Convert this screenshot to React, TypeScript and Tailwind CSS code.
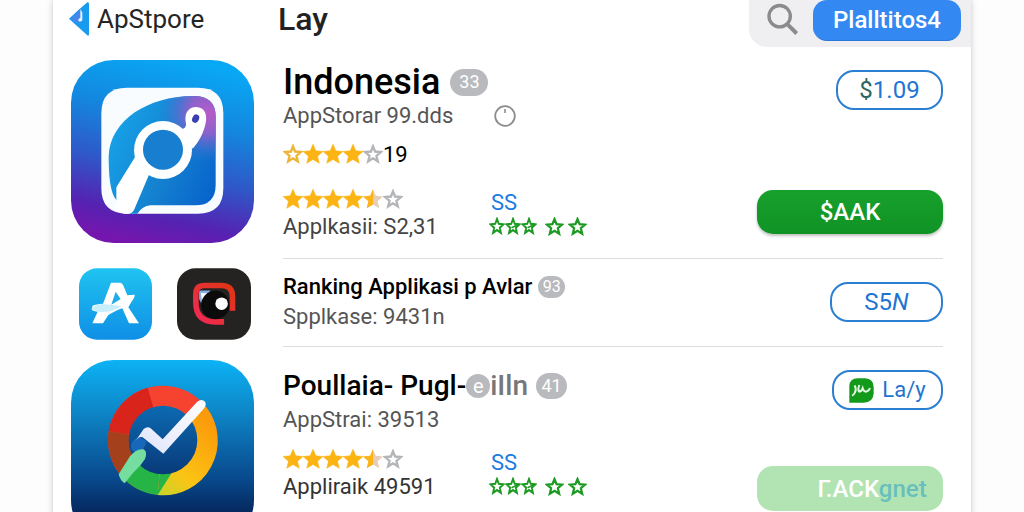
import React from "react";
import clsx from "clsx";

type StarKind = "full" | "half" | "hollow" | "empty";

const STAR = "M12 1.2 15.1 8.5 23 9.2 17 14.4 18.9 22.2 12 18 5.1 22.2 7 14.4 1 9.2 8.9 8.5Z";

const Star: React.FC<{ kind: StarKind }> = ({ kind }) => {
  if (kind === "full") {
    return (
      <svg viewBox="1 1 22 22" className="w-5 h-5">
        <path d={STAR} fill="#fbb414" stroke="#fbb414" strokeWidth="0.6" />
      </svg>
    );
  }
  if (kind === "half") {
    return (
      <svg viewBox="1 1 22 22" className="w-5 h-5">
        <path d={STAR} fill="#e6cdb8" />
        <path d="M12 1.2V18L5.1 22.2 7 14.4 1 9.2 8.9 8.5Z" fill="#fbb414" />
      </svg>
    );
  }
  return (
    <svg viewBox="1 1 22 22" className="w-5 h-5">
      <path
        d="M12 3.6 14.3 9.3 20.6 9.9 15.8 14 17.3 20.1 12 16.8 6.7 20.1 8.2 14 3.4 9.9 9.7 9.3Z"
        fill="#fff"
        stroke={kind === "hollow" ? "#eeb437" : "#b4b5b8"}
        strokeWidth="2.6"
      />
    </svg>
  );
};

const Stars: React.FC<{ kinds: StarKind[]; label: string }> = ({ kinds, label }) => (
  <div role="img" aria-label={label} className="flex">
    {kinds.map((kind, i) => (
      <Star key={i} kind={kind} />
    ))}
  </div>
);

const GreenStar: React.FC<{ small?: boolean; cut?: boolean }> = ({ small, cut }) => (
  <svg viewBox="1 1 22 22" preserveAspectRatio="none" className={small ? "w-4 h-[18px]" : "w-[19px] h-[19px]"}>
    <path
      d="M12 3.4 14.4 9.3 20.8 9.9 15.9 14 17.4 20.4 12 17 6.6 20.4 8.1 14 3.2 9.9 9.6 9.3Z"
      fill="#fff"
      stroke="#1c9a22"
      strokeWidth="2.6"
    />
    {cut && <path d="m10 14 10-4" stroke="#1c9a22" strokeWidth="2" />}
  </svg>
);

const Extra: React.FC = () => (
  <div className="pt-[2px]">
    <p className="pl-[2px] text-[22px] leading-6 text-[#1a7be0]">SS</p>
    <div className="flex items-center h-[22px]">
      <GreenStar small />
      <GreenStar small cut />
      <GreenStar small cut />
      <span className="flex gap-1 ml-2">
        <GreenStar />
        <GreenStar />
      </span>
    </div>
  </div>
);

const Badge: React.FC<{ children: React.ReactNode; className?: string }> = ({ children, className }) => (
  <span
    className={clsx(
      "inline-flex items-center justify-center rounded-full bg-[#b9babd] font-normal text-white",
      className
    )}
  >
    {children}
  </span>
);

const PillButton: React.FC<{ children: React.ReactNode; className?: string }> = ({ children, className }) => (
  <button
    className={clsx(
      "flex items-center justify-center h-10 rounded-[18px] border-2 border-[#2b7fd3] bg-white text-2xl text-[#1f74d2]",
      className
    )}
  >
    {children}
  </button>
);

const SearchAppIcon: React.FC = () => (
  <svg viewBox="32 30 549 549" className="w-[183px] h-[183px]">
    <defs>
      <linearGradient id="sBg" x1="0.6" y1="0" x2="0.38" y2="1">
        <stop offset="0" stopColor="#09a8f5" />
        <stop offset="0.3" stopColor="#1388df" />
        <stop offset="0.6" stopColor="#2f58c8" />
        <stop offset="0.85" stopColor="#5522b2" />
        <stop offset="1" stopColor="#7416ae" />
      </linearGradient>
      <linearGradient id="sInner" x1="0" y1="0.3" x2="1" y2="0.8">
        <stop offset="0" stopColor="#17a2e8" />
        <stop offset="0.55" stopColor="#1481cf" />
        <stop offset="1" stopColor="#0763cc" />
      </linearGradient>
      <radialGradient id="sPink" cx="445" cy="190" r="150" gradientUnits="userSpaceOnUse">
        <stop offset="0" stopColor="#b85bc6" />
        <stop offset="0.4" stopColor="#8a62cc" />
        <stop offset="1" stopColor="#2c78d6" stopOpacity="0" />
      </radialGradient>
    </defs>
    <rect x="32" y="30" width="549" height="549" rx="128" fill="url(#sBg)" />
    <path
      d="M200 113H413Q489 113 489 190V415Q489 491 413 491H200Q123 491 123 415V190Q123 113 200 113Z"
      fill="#f8fcff"
    />
    <path
      d="M145 318C150 210 262 139 398 138Q466 137 466 200V404Q466 466 404 466H270Q246 468 231 491H205L168 450C150 430 145 380 145 318Z"
      fill="url(#sInner)"
    />
    <path
      d="M145 318C150 210 262 139 398 138Q466 137 466 200V404Q466 466 404 466H270Q246 468 231 491H205L168 450C150 430 145 380 145 318Z"
      fill="url(#sPink)"
    />
    <path d="M226 318 168 412V452L160 470 190 491H208Q217 489 221 480L266 374Z" fill="#fff" />
    <path
      d="M368 236Q381 232 376 215C372 190 384 171 408 171C431 172 440 190 437 214C431 250 415 275 398 295L372 300 346 250Z"
      fill="#fff"
    />
    <circle cx="308" cy="300" r="87" fill="#fff" />
    <circle cx="308" cy="299" r="60" fill="#187fd0" />
    <ellipse cx="406" cy="206" rx="10" ry="13" transform="rotate(25 406 206)" fill="#393fae" />
  </svg>
);

const StoreIcon: React.FC = () => (
  <svg viewBox="54 38 219 214" className="w-[73px] h-[72px]">
    <defs>
      <linearGradient id="aBg" x1="0" y1="0" x2="0" y2="1">
        <stop offset="0" stopColor="#1fc3f0" />
        <stop offset="1" stopColor="#0f8fe6" />
      </linearGradient>
    </defs>
    <rect x="54" y="38" width="219" height="214" rx="54" fill="url(#aBg)" />
    <path
      d="M150 81H178Q184 82 188 92L199 119 221 117Q223 122 211 139L202 155 234 203H204L184 158Q172 162 158 169L142 178 126 203H94L110 168Q92 166 92 160L95 150Q105 145 126 144Z"
      fill="#fff"
    />
    <path d="M164 108 179 130 151 147Z" fill="#20abea" />
    <path d="M92 162Q94 148 125 145L181 151Q155 171 116 169Z" fill="#c8edfb" />
  </svg>
);

const CameraIcon: React.FC = () => (
  <svg viewBox="350 38 224 216" className="w-[74px] h-[72px]">
    <defs>
      <linearGradient id="cRed" x1="0" y1="1" x2="1" y2="0">
        <stop offset="0" stopColor="#f22a55" />
        <stop offset="1" stopColor="#dd3513" />
      </linearGradient>
    </defs>
    <rect x="350" y="38" width="224" height="216" rx="56" fill="#252322" />
    <path
      d="M518 158V124Q518 90 485 90H434Q407 90 407 116V141Q407 200 466 200H484"
      fill="none"
      stroke="url(#cRed)"
      strokeWidth="17"
      strokeLinecap="square"
      strokeLinejoin="round"
    />
    <path d="M417 109Q418 105 424 105H451L427 145Q419 140 417 130Z" fill="#86aee6" />
    <path d="M422 113H441L426 139Z" fill="#f3f7ff" />
    <circle cx="466" cy="149" r="43" fill="#0b0b0c" />
    <circle cx="485" cy="145" r="19" fill="#fff" />
  </svg>
);

const CheckAppIcon: React.FC = () => (
  <svg viewBox="32 45 549 549" className="w-[183px] h-[183px]">
    <defs>
      <linearGradient id="kBg" x1="0" y1="0" x2="0" y2="1">
        <stop offset="0" stopColor="#0cb3f5" />
        <stop offset="0.3" stopColor="#0d83c4" />
        <stop offset="0.65" stopColor="#08498c" />
        <stop offset="0.85" stopColor="#05255a" />
      </linearGradient>
      <linearGradient id="kDisc" x1="0" y1="0" x2="0" y2="1">
        <stop offset="0" stopColor="#0d6ab2" />
        <stop offset="1" stopColor="#083a79" />
      </linearGradient>
      <linearGradient id="kYellow" x1="0" y1="1" x2="0.6" y2="0">
        <stop offset="0" stopColor="#c4d52c" />
        <stop offset="0.35" stopColor="#fbc414" />
        <stop offset="1" stopColor="#fb9a0a" />
      </linearGradient>
      <linearGradient id="kTick" x1="0" y1="1" x2="1" y2="0">
        <stop offset="0" stopColor="#dfe3fb" />
        <stop offset="1" stopColor="#fff" />
      </linearGradient>
    </defs>
    <rect x="32" y="45" width="549" height="549" rx="128" fill="url(#kBg)" />
    <circle cx="307" cy="286" r="164" fill="#f54330" />
    <path d="M307 286 145 258A164 164 0 0 1 262 128Z" fill="#d9241b" />
    <path d="M307 286 145 258A164 164 0 0 0 190 400Z" fill="#a4411c" />
    <path d="M307 286 184 394A164 164 0 0 0 292 450Z" fill="#25b445" />
    <path d="M307 286 292 450A164 164 0 0 0 436 184Z" fill="url(#kYellow)" />
    <path d="M307 286 292 450 334 384Z" fill="#25b445" />
    <circle cx="308" cy="285" r="103" fill="url(#kDisc)" />
    <path d="M216 318Q202 290 236 276L258 288Q254 318 230 322Z" fill="#1768ba" />
    <path
      d="M225 289 250 252Q262 242 271 250L307 283 410 171Q424 159 434 170 440 180 429 193L309 326 247 277Q236 272 225 289Z"
      fill="url(#kTick)"
    />
    <path d="M175 388 209 334Q228 310 250 313 262 320 254 342 240 365 218 384L193 415Q180 408 175 388Z" fill="#76dda0" />
  </svg>
);

export default function App() {
  return (
    <div className="h-screen overflow-hidden bg-[#fdfdfd] px-[53px] font-['Roboto','Liberation_Sans',sans-serif] text-black">
      <main className="min-h-full bg-white shadow-[0_0_6px_rgba(0,0,0,0.22)]">
        <header className="flex items-start justify-between">
          <div className="flex items-center h-[38px] pl-4">
            <a href="#back" className="flex items-center gap-2 w-[209px] text-[26px] text-[#252525]">
              <svg viewBox="0 0 60 102" className="w-5 h-[34px]">
                <path d="M0 50Q28 24 55 1 60-1 60 6V96Q60 104 54 99Z" fill="#179bef" />
                <path d="M5 50 39 18V60Q25 66 14 56Z" fill="#4787ec" />
                <path d="M34 21 40 32V55Q35 62 28 56 27 49 34 48Z" fill="#e8f1ff" />
              </svg>
              ApStpore
            </a>
            <h1 className="text-[32px] font-medium text-[#222]">Lay</h1>
          </div>
          <div className="flex items-start h-[47px] pl-[18px] pr-[10px] rounded-bl-[18px] bg-[#efeff1]">
            <button aria-label="Search" className="mt-[3px] mr-[14px]">
              <svg viewBox="0 0 96 98" className="w-8 h-[33px]">
                <circle cx="38" cy="39" r="32" fill="none" stroke="#8b8b8c" strokeWidth="10" />
                <path d="m61 63 28 28" stroke="#8b8b8c" strokeWidth="12" />
              </svg>
            </button>
            <button className="h-[41px] w-[148px] rounded-[14px] border-b border-[#2a78d8] bg-[#3389f1] text-2xl font-medium text-white">
              Plalltitos4
            </button>
          </div>
        </header>

        <article className="flex gap-[29px] pl-[18px] pr-7">
          <div className="shrink-0 pt-[13px]">
            <SearchAppIcon />
          </div>
          <div className="flex flex-1 justify-between border-b border-[#dcdcdd] pt-[17px] pb-[17px]">
            <div>
              <h2 className="flex items-center gap-[10px] text-4xl leading-9 font-medium">
                Indonesia
                <Badge className="w-[38px] h-[27px] text-lg">33</Badge>
              </h2>
              <div className="flex items-center mt-[2px]">
                <p className="w-[211px] text-[22px] leading-7 text-[#555]">AppStorar 99.dds</p>
                <svg viewBox="0 0 22 22" className="w-[22px] h-[22px]">
                  <circle cx="11" cy="11" r="9.8" fill="none" stroke="#8c8c8e" strokeWidth="1.8" />
                  <path d="M11 4v4" stroke="#8c8c8e" strokeWidth="1.6" />
                </svg>
              </div>
              <div className="flex items-center mt-[14px] h-5 text-[22px]">
                <Stars kinds={["hollow", "full", "full", "full", "empty"]} label="3 of 5" />
                19
              </div>
              <div className="flex mt-[25px]">
                <div className="w-[206px]">
                  <Stars kinds={["full", "full", "full", "full", "half", "empty"]} label="4.5 of 6" />
                  <p className="mt-1 text-[22px] leading-7 text-[#444]">Applkasii: S2,31</p>
                </div>
                <Extra />
              </div>
            </div>
            <div className="flex flex-col items-end justify-between pt-[6px] pb-[7px]">
              <PillButton className="w-[107px]">
                <span className="text-[#2c6660]">$</span>1.09
              </PillButton>
              <button className="h-11 w-[186px] rounded-2xl bg-linear-to-b from-[#18a02c] to-[#0f9325] text-2xl font-medium text-white shadow-[0_2px_3px_rgba(0,0,0,0.25)]">
                $AAK
              </button>
            </div>
          </div>
        </article>

        <article className="flex gap-[29px] pl-[18px] pr-7">
          <div className="flex items-center shrink-0 gap-[25px] w-[183px] pt-[2px] pl-2">
            <StoreIcon />
            <CameraIcon />
          </div>
          <div className="flex flex-1 items-center justify-between border-b border-[#dcdcdd] pt-[14px] pb-[15px]">
            <div>
              <h2 className="flex items-center gap-[6px] text-[22px] leading-7 font-medium">
                Ranking Applikasi p Avlar
                <Badge className="w-[27px] h-[22px] text-base">93</Badge>
              </h2>
              <p className="mt-[2px] text-[22px] leading-7 text-[#555]">Spplkase: 9431n</p>
            </div>
            <PillButton className="w-[113px]">
              S5<span className="italic">N</span>
            </PillButton>
          </div>
        </article>

        <article className="flex gap-[29px] pl-[18px] pr-7">
          <div className="shrink-0 pt-[13px]">
            <CheckAppIcon />
          </div>
          <div className="flex flex-1 items-start justify-between pt-[21px]">
            <div>
              <h2 className="flex items-center text-[28px] leading-9 font-medium">
                Poullaia- Pugl-
                <Badge className="w-6 h-6 text-xl">e</Badge>
                <span className="text-[#77777a]">iIln</span>
                <Badge className="ml-2 w-[31px] h-[26px] text-lg">41</Badge>
              </h2>
              <p className="mt-[2px] text-[22px] leading-7 text-[#555]">AppStrai: 39513</p>
              <div className="flex mt-[15px]">
                <div className="w-[206px]">
                  <Stars kinds={["full", "full", "full", "full", "half", "empty"]} label="4.5 of 6" />
                  <p className="mt-1 text-[22px] leading-7 text-[#333]">Appliraik 49591</p>
                </div>
                <Extra />
              </div>
            </div>
            <div className="flex flex-col items-end gap-14 pt-[2px]">
              <PillButton className="w-[111px] gap-2">
                <svg viewBox="0 0 75 75" className="w-[25px] h-[25px]">
                  <path d="M1 74V24Q2 1 26 1H48Q74 2 74 28V46Q73 74 44 74Z" fill="#139a1b" />
                  <path
                    d="M17 22Q23 34 18 43 14 51 9 53M31 21Q25 36 31 41 38 40 41 31 44 42 52 41 61 38 63 30"
                    fill="none"
                    stroke="#e4f8e4"
                    strokeWidth="6"
                  />
                </svg>
                <span className="text-[22px]">La/y</span>
              </PillButton>
              <button className="h-[45px] w-[186px] rounded-2xl bg-[#b2e4b3] pl-11 text-2xl font-medium text-white">
                Γ.ACK<span className="text-[#69bfbd]">gnet</span>
              </button>
            </div>
          </div>
        </article>
      </main>
    </div>
  );
}
